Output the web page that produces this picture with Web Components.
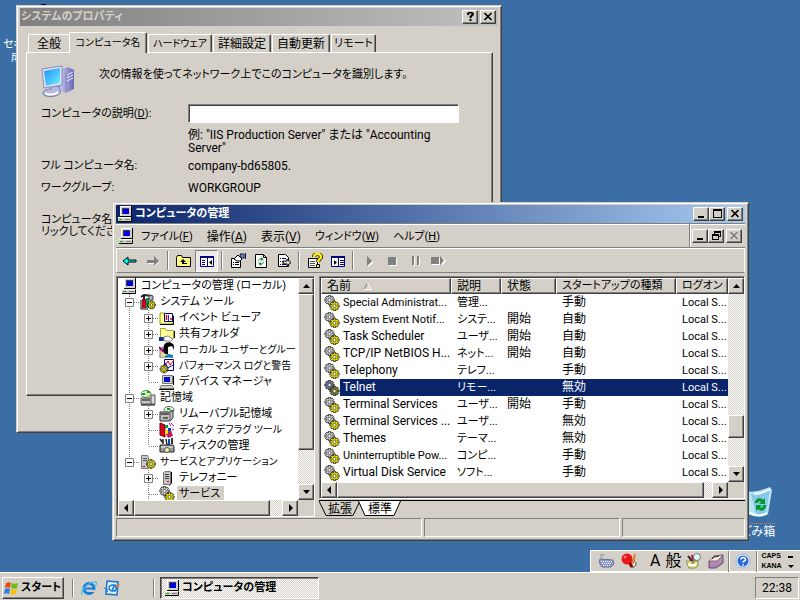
<!DOCTYPE html>
<html lang="ja">
<head>
<meta charset="utf-8">
<title>コンピュータの管理</title>
<style>
html,body{margin:0;height:100%;overflow:hidden}
body{font:12px/16px Roboto,"Noto Sans CJK JP",sans-serif;color:#000;background:#3a6ea5}
</style>
</head>
<body>
<xp-desktop></xp-desktop>
<script>
const COMMON = `
*{box-sizing:border-box}
:host{box-sizing:border-box;font-feature-settings:"palt"}
:host([hidden]){display:none}
button,input{font:inherit;color:inherit;margin:0;padding:0;border-radius:0;font-feature-settings:"palt"}
button{background:none;border:0;white-space:nowrap}
.raised{background:#d4d0c8;border:1px solid;border-color:#fff #404040 #404040 #fff;box-shadow:inset -1px -1px #808080}
`;

function gear(cx, cy, r, fill) {
  const n = 8, pts = [];
  for (let i = 0; i < n; i++) {
    const a = i / n * Math.PI * 2;
    [[-.24, r], [.24, r], [.28, r * .68], [.52, r * .68]].forEach(([d, q]) =>
      pts.push((cx + Math.cos(a + d) * q).toFixed(1) + ',' + (cy + Math.sin(a + d) * q).toFixed(1)));
  }
  return `<polygon points="${pts.join(' ')}" fill="${fill}" stroke="#111" stroke-width=".7"/><circle cx="${cx}" cy="${cy}" r="${r * .33}" fill="#fff" stroke="#111" stroke-width=".6"/>`;
}
const PC = `<path d="M3 0h11v10H3z" fill="#d4d0c8"/><path d="M3 .5h11M3.500 0v10" stroke="#fff"/><path d="M14.500 0v10.500H3" stroke="#000" fill="none"/><path d="M5 2h7v6H5z" fill="#444"/><path d="M6 3h6v5H6z" fill="#0000e0"/><path d="M2 11h12v4H1v-3z" fill="#d4d0c8"/><path d="M1 11.500h13" stroke="#fff"/><path d="M1 15.500h13.500v-4" stroke="#000" fill="none"/><path d="M2 13h3v1H2z" fill="#0b0"/><path d="M8 13h5v1H8z" fill="#808080"/>`;
const FOLDER = `<path d="M1 3h5l1 2h7v9H1z" fill="#ffff9c" stroke="#9c9a00"/>`;
const ICONS = {
  computer: [16, PC],
  gears: [16, gear(5.500, 5, 4.800, '#d0d0d0') + gear(10.500, 11, 4.800, '#f0e800')],
  gearsel: [16, gear(5.500, 5, 4.800, '#7880a8') + gear(10.500, 11, 4.800, '#808830')],
  tools: [16, `<path d="M2 5h4v9H2z" fill="#c00020"/><path d="M1 3l3-2 8 1M4 2v4" stroke="#222" stroke-width="2" fill="none"/><path d="M6 4h3v10H6z" fill="#109060"/><path d="M9 1l4 1v4H9z" fill="#b8b8c0" stroke="#444"/><path d="M1 6v9h7" stroke="#000" fill="none"/>` + gear(11.500, 11, 4, '#f0e800')],
  event: [16, FOLDER + `<path d="M5.500 3.500h8v8h-8z" fill="#fff" stroke="#000080"/><path d="M7.500 5v5M12 8v2" stroke="#e00000" stroke-width="1.500"/><path d="M9.500 5v6" stroke="#22f"/><path d="M1 14.500h13.500V6" stroke="#000" fill="none"/>`],
  share: [16, `<path d="M1.500 2.500h5l1 2h7v8h-13z" fill="#ffff9c" stroke="#a8a430"/><path d="M0 11h5v4H0z" fill="#0830a0"/><path d="M5 11l4-1 5 3-2 2H5z" fill="#fff" stroke="#888"/><path d="M15.500 5v7" stroke="#000"/>`],
  users: [16, `<path d="M1 7l5-3 5 9-4 3H1z" fill="#e7d8a0" stroke="#777"/><path d="M5 4c0-5 10-5 10 1v3l-2-2-4 2v4H6L4 8z" fill="#000"/><path d="M9 5l4-1 2 4-2 4H9z" fill="#fff"/><path d="M0 5l5 5" stroke="#a00070" stroke-width="2"/><path d="M5 15l4-3 5 1v3z" fill="#1880c0"/>`],
  perf: [16, `<path d="M5.500 1.500h9v11h-9z" fill="#fff" stroke="#000080"/><path d="M6 8l3-5 2 4 4-5" stroke="#e00000" fill="none"/><path d="M6 5l3 5 5-3" stroke="#00f" fill="none"/>` + gear(5, 11, 4, '#f0e800')],
  device: [16, `<path d="M3.500 1.500h10v8h-10z" fill="#d4d0c8" stroke="#777"/><path d="M5 3h6v5H5z" fill="#0010d0"/><path d="M2 11.500h11l2 3H1z" fill="#d4d0c8" stroke="#777"/><path d="M0 15.500h15M14.500 2v9" stroke="#000"/>`],
  storage: [16, `<ellipse cx="6" cy="4" rx="5" ry="3.500" fill="#d8f4d8" stroke="#777"/><path d="M2 4h3M7 2h3" stroke="#00b000" stroke-width="2"/><path d="M6 4l4 2" stroke="#dd0"/><path d="M1 8h11v6H1z" fill="#c8c8c8" stroke="#555"/><path d="M11 5h4v9h-4z" fill="#ddd" stroke="#555"/><path d="M2 10h8M1 15h14" stroke="#000"/>`],
  removable: [16, `<ellipse cx="10" cy="3.500" rx="5" ry="3" fill="#e8f8e0" stroke="#666"/><path d="M8 3h3" stroke="#00a000" stroke-width="2"/><path d="M11 4l3 1" stroke="#08d"/><path d="M1 6h10l3-2v8l-3 3H1z" fill="#c0c0c0" stroke="#333"/><path d="M2 8h8M4 12h5" stroke="#000"/><path d="M11 6v9" stroke="#555"/>`],
  defrag: [16, `<path d="M1 1l5 2v12l-5-2z" fill="#e00020" stroke="#600"/><path d="M6 3h3v3H6zM9 9h3v3H9z" fill="#00a040"/><path d="M9 6h3v3H9z" fill="#0040e0"/><path d="M7 12l5-4 2 6-5 2z" fill="#c02060"/><path d="M10 1l2 3M12 1l3 3M13 7l2 1" stroke="#c000c0"/><path d="M6 8h3v4H6z" fill="#eee000"/>`],
  diskmgmt: [16, `<path d="M1 1l3 4M4 1v5M7 1l1 6" stroke="#222" stroke-width="1.500"/><path d="M10 1v7" stroke="#04c" stroke-width="2"/><path d="M13 0v6" stroke="#333" stroke-width="2"/><path d="M1 7h13l1 2v5H1z" fill="#999" stroke="#222"/><path d="M2 9h12" stroke="#fff"/><circle cx="8" cy="12" r="2.500" fill="#f8f4b0" stroke="#555"/>`],
  apps: [16, `<path d="M1.500 1.500h6l1 2v11h-7z" fill="#c8c8c8" stroke="#777"/><path d="M3 4.500h4M3 6.500h4" stroke="#555"/><path d="M3 12h2v1H3z" fill="#e00"/>` + gear(11, 10, 4.500, '#f0e800')],
  server: [16, `<path d="M4.500 2.500l2-1h5v12l-1 1h-6z" fill="#c4c4c4" stroke="#777"/><path d="M6 4.500h4M6 6.500h4M6 8.500h4" stroke="#444"/><path d="M12.500 2v11l-2 2.500" stroke="#000" fill="none"/><path d="M8 11h2v1H8z" fill="#e00"/>`],
  back: [16, `<path d="M1 8l5-4v3h8v2H6v3z" fill="#0ff" stroke="#000"/>`],
  forward: [16, `<path d="M14 8L9 3v4H2v3h7v3z" fill="#808080"/><path d="M3 10.500h6M9.500 13L14.500 8.500" stroke="#fff"/>`],
  up: [16, `<path d="M.5 13.500v-9l1-2h4l1 2h8v9z" fill="#ffff80" stroke="#000"/><path d="M7 6l-3 3h2v2h5v-1H8V9h2z" fill="#000"/>`],
  panetree: [16, `<path d="M1.500 3.500h13v10h-13z" fill="#fff" stroke="#000080"/><path d="M1 3h14v2H1z" fill="#000080"/><path d="M8.500 5v9" stroke="#000080"/><path d="M3 7h3v1H3zM3 9h3v1H3zM3 11h3v1H3z" fill="#000080"/><path d="M13 7v5l-3-2.500z" fill="#000"/>`],
  pane2: [16, `<path d="M1.500 3.500h13v10h-13z" fill="#fff" stroke="#000080"/><path d="M1 3h14v2H1z" fill="#000080"/><path d="M8.500 5v9" stroke="#000080"/><path d="M10 7h4v1h-4zM10 9h4v1h-4zM10 11h4v1h-4z" fill="#000080"/><path d="M4 7v5l3-2.500z" fill="#000"/>`],
  props: [16, `<path d="M1.500 5.500h9v9h-9z" fill="#fff" stroke="#000"/><path d="M3 9.500h1M5 9.500h4M3 11.500h1M5 11.500h4" stroke="#000"/><path d="M4 6l4-4 4 4-2 2H7z" fill="#fff" stroke="#000"/><path d="M10 1h4v4h-3z" fill="#7894c8" stroke="#123"/><path d="M15.500 0v6" stroke="#000080"/>`],
  refresh: [16, `<path d="M2.500 1.500h8l3 3v10h-11z" fill="#fff" stroke="#000"/><path d="M10.500 1.500v3h3" fill="none" stroke="#000"/><path d="M5.500 8c0-2 3-3 5-1M10.500 9c0 2-3 3-5 1" fill="none" stroke="#008000"/><path d="M8 4l2 2-2 2zM8 9l-2 2 2 2z" fill="#008000"/>`],
  export: [16, `<path d="M2.500 1.500h7l3 3v9h-10z" fill="#fff" stroke="#000"/><path d="M4 5.500h1M6 5.500h4M4 8.500h1M6 8.500h4M4 11.500h1M6 11.500h4" stroke="#000080"/><path d="M7 8h4V6l4 3.500-4 3.500v-2H7z" fill="#d4d0c8" stroke="#000"/>`],
  help: [16, `<path d="M1.500 5.500h9v9h-9z" fill="#fff" stroke="#000"/><path d="M3 8.500h5M3 10.500h5M3 12.500h5" stroke="#555"/><path d="M7 4c0-4 7-4 7 0 0 2-3 2-3 5" fill="none" stroke="#000" stroke-width="4"/><path d="M7 4c0-4 7-4 7 0 0 2-3 2-3 5" fill="none" stroke="#fff000" stroke-width="2.500"/><path d="M9.500 11.500h3v3h-3z" fill="#fff000" stroke="#000"/>`],
  play: [16, `<path d="M7 13.500l5-5" stroke="#fff" stroke-width="1.500"/><path d="M6 3v10l5-5z" fill="#808080"/>`],
  stop: [16, `<path d="M5 5h8v8H5z" fill="#fff"/><path d="M4 4h8v8H4z" fill="#808080"/>`],
  pause: [16, `<path d="M6 4h2v9H6zM11 4h2v9h-2z" fill="#fff"/><path d="M5 3h2v9H5zM10 3h2v9h-2z" fill="#808080"/>`],
  restart: [16, `<path d="M2 5h8v7H2zM12 4l4 4-4 5z" fill="#fff"/><path d="M1 4h8v7H1zM10 3v9l4-4.500z" fill="#808080"/>`],
  winflag: [16, `<path d="M2 3c2-1 3-1 5 0L6 8C4 7 3 7 1 8z" fill="#e84818"/><path d="M8 3c2 1 4 1 6 0l-1 5c-2 1-4 1-6 0z" fill="#70b818"/><path d="M1 9c2-1 3-1 5 0l-1 5c-2-1-3-1-5 0z" fill="#2878e0"/><path d="M7 9c2 1 4 1 6 0l-1 5c-2 1-4 1-6 0z" fill="#f8c010"/>`],
  ie: [16, `<circle cx="8" cy="8.500" r="5" fill="none" stroke="#1480dc" stroke-width="3"/><path d="M4 8.500h9" stroke="#1480dc" stroke-width="2"/><path d="M9 10h7v2H9z" fill="#d4d0c8"/><path d="M1 15C-1 10 9 1 15 2c1 1 0 3-1 4" fill="none" stroke="#58b8f0" stroke-width="1.300"/>`],
  outlook: [16, `<path d="M3 1l11 1-1 13-11-1z" fill="#dceeff" stroke="#1878d0" stroke-width="1.500"/><path d="M10 5c-6-1-7 6-1 6 4 0 4-4 2-6l-3 5" fill="none" stroke="#1878d0" stroke-width="1.500"/><path d="M12 5l4-1-3 4z" fill="#f07020"/><path d="M0 8l4 2M1 12l3-1" stroke="#1878d0"/>`],
  keyboard: [16, `<path d="M3 5c-5-6 5-2 1-3" fill="none" stroke="#888"/><path d="M1 6l13 1 1 4-3 3H3L0 9z" fill="#8c98d0" stroke="#6670a0"/><path d="M2 8.500h11M3 10.500h10M4 12.500h8" stroke="#fff" stroke-dasharray="1 1"/>`],
  racket: [16, `<path d="M12 8c5 0 3 7-1 6S9 9 12 8" fill="#fff" stroke="#333"/><path d="M14 1l-2 10" stroke="#e08030" stroke-width="2"/><circle cx="6" cy="6" r="5.500" fill="#e81818"/><path d="M9 10l2 4" stroke="#900" stroke-width="3"/><circle cx="4" cy="4" r="1.500" fill="#ff7070"/>`],
  palette: [16, `<path d="M0 8h12v5l-3 2H3z" fill="#eee860" stroke="#887"/><path d="M2 3l4 5" stroke="#222" stroke-width="2"/><path d="M6 2l1 6" stroke="#e00020" stroke-width="2"/><path d="M8 4v5" stroke="#08c" stroke-width="2"/><circle cx="11" cy="4" r="3.500" fill="#dff" stroke="#777"/><path d="M9 7l-3 4" stroke="#888" stroke-width="2"/><path d="M2 12h8" stroke="#fff" stroke-width="2"/>`],
  toolbox: [16, `<path d="M1 8l5-5 9-1v8l-7 5H1z" fill="#a888b0" stroke="#604868"/><path d="M1 8l5-5 9-1-6 6z" fill="#f8e8d0" stroke="#777"/><path d="M4 6l2-2 5-1" stroke="#222" fill="none"/><path d="M2 11h6l6-5" stroke="#e080c0" fill="none"/>`],
  qhelp: [16, `<circle cx="8" cy="8" r="7" fill="#f0f8ff" stroke="#90b0e8"/><circle cx="8" cy="8" r="5.500" fill="#2868d8"/><path d="M6 6.500c0-3 4.500-2.500 4.500 0C10.500 8 8 8 8 9.500M8 11v1.500" stroke="#fff" stroke-width="1.600" fill="none"/>`],
  bigpc: [34, `<defs><linearGradient id="s" x1="0" y1="0" x2="1" y2="1"><stop offset="0" stop-color="#2090f8"/><stop offset="1" stop-color="#70f0ff"/></linearGradient><linearGradient id="t"><stop offset="0" stop-color="#dcdcf4"/><stop offset="1" stop-color="#6468b0"/></linearGradient></defs><path d="M18 5l9-3 6 3v19l-8 4-9-3z" fill="url(#t)"/><path d="M25 8v19" stroke="#8488c0"/><path d="M26 10l6-3M26 13l6-3M26 16l6-3" stroke="#f0f0ff"/><path d="M10 21h8l1 4c4 7-17 9-17 3 0-3 5-4 8-4z" fill="#b4b8e0" stroke="#7478b0"/><path d="M4 28c3 2 10 2 13-1" stroke="#fff" stroke-width="2" fill="none"/><path d="M1 4l20-3v19L3 23z" fill="#e4e6fa" stroke="#8488c0"/><path d="M3 6l16-3v15L5 21z" fill="url(#s)"/>`],
  bin: [34, `<path d="M4 5c8 2 18-1 25-4l2 3-4 24c-5 4-14 3-20 0z" fill="#b8e4f4"/><path d="M10 8c7 0 13-2 19-6l-4 26c-4 2-7 2-10 1z" fill="#88c8e8"/><path d="M13 8c6 0 11-2 16-5M8 26c5 4 13 4 18 1" stroke="#f4ffff" stroke-width="2" fill="none"/><path d="M14 17c0-5 6-6 8-3l2-2v6h-6l2-2c-1-1-3-1-3 1z" fill="#009828"/><path d="M25 19c0 6-6 7-8 4l-2 2v-6h6l-2 2c1 1 3 1 3-2z" fill="#009828"/>`],
};
class XpIcon extends HTMLElement {
  constructor() { super(); this.attachShadow({ mode: 'open' }); }
  connectedCallback() {
    const [size, body] = ICONS[this.getAttribute('name')];
    this.shadowRoot.innerHTML = `<style>:host{display:inline-flex;flex:none}svg{display:block}</style>
      <svg width="${size}" height="${size}" viewBox="0 0 ${size} ${size}" fill="none" aria-hidden="true">${body}</svg>`;
  }
}
customElements.define('xp-icon', XpIcon);

const GLYPH = {
  min: '<path d="M3 8h6v2H3z"/>',
  max: '<path d="M2 1h9v9H2zM3 3v6h7V3z" fill-rule="evenodd"/>',
  close: '<path d="M2.500 2l7 7M9.500 2l-7 7" fill="none" stroke="currentColor" stroke-width="1.700"/>',
  help: '<path d="M3 3c0-3 7-3 7 0 0 2-2.500 2-2.500 4h-2c0-3 2-3 2-4S5 2 5 4H3zM5.500 8h2v2h-2z"/>',
  restore: '<path d="M4 1h7v6H9v3H2V4h2zM5 3v1h4v2h1V3zM3 6v3h5V6z" fill-rule="evenodd"/>',
  up: '<path d="M3 8l3.500-4L10 8z"/>', down: '<path d="M3 4l3.500 4L10 4z"/>',
  left: '<path d="M8 2v8L4 6z"/>', right: '<path d="M5 2v8l4-4z"/>'
};
const glyph = (n, c = '#000') => `<svg width="13" height="12" viewBox="0 0 13 12" fill="${c}" color="${c}" aria-hidden="true">${GLYPH[n]}</svg>`;

class XpCaption extends HTMLElement {
  connectedCallback() {
    const names = { min: '最小化', max: '最大化', close: '閉じる', help: 'ヘルプ', restore: '元に戻す' };
    const off = this.hasAttribute('disabled-close');
    this.attachShadow({ mode: 'open' }).innerHTML = `<style>${COMMON}
      :host{display:flex;flex:none}
      button{width:16px;height:14px;display:flex;align-items:center;justify-content:center}
      button[data-k=close]{margin-left:2px} svg{display:block;flex:none}</style>` +
      this.getAttribute('buttons').split(' ').map(k =>
        `<button class="raised" data-k="${k}" aria-label="${names[k]}">${glyph(k, off && k === 'close' ? '#808080' : '#000')}</button>`).join('');
  }
}
customElements.define('xp-caption', XpCaption);

class XpWindow extends HTMLElement {
  connectedCallback() {
    const ic = this.getAttribute('icon');
    this.attachShadow({ mode: 'open' }).innerHTML = `<style>${COMMON}
      :host{display:flex;flex-direction:column;background:#d4d0c8;border:1px solid;border-color:#d4d0c8 #404040 #404040 #d4d0c8;
        box-shadow:inset 1px 1px #fff,inset -1px -1px #808080;padding:2px 3px 3px}
      header{display:flex;align-items:center;flex:none;height:18px;padding:0 2px 0 1px;gap:2px;color:#fff;
        background:linear-gradient(90deg,#0a246a,#a6caf0);font-size:11px;font-weight:bold}
      :host([inactive]) header{background:linear-gradient(90deg,#808080,#c0c0c0);color:#d4d0c8}
      h1{font:inherit;margin:0;flex:1;min-width:0;white-space:nowrap}
      main{display:flex;flex-direction:column;flex:1;min-height:0}</style>
      <header>${ic ? `<xp-icon name="${ic}"></xp-icon>` : ''}<h1>${this.getAttribute('caption')}</h1>
      <xp-caption buttons="${this.getAttribute('buttons')}"></xp-caption></header><main><slot></slot></main>`;
  }
}
customElements.define('xp-window', XpWindow);

class XpScroll extends HTMLElement {
  connectedCallback() {
    const v = this.hasAttribute('vertical');
    const [a, t, b] = this.getAttribute('parts').split(' ');
    this.attachShadow({ mode: 'open' }).innerHTML = `<style>${COMMON}
      :host{display:flex;flex:none;${v ? 'flex-direction:column;width:16px' : 'height:16px'};
        background:repeating-conic-gradient(#fff 0 25%,#d4d0c8 0 50%) 0 0/2px 2px}
      button{width:16px;height:16px;flex:none;display:flex;align-items:center;justify-content:center}
      svg{flex:none} i{flex:0 1 0} i:nth-of-type(1){flex-grow:${a}} i:nth-of-type(2){flex-grow:${t}} i:nth-of-type(3){flex-grow:${b}}</style>
      <button class="raised" aria-label="前へスクロール">${glyph(v ? 'up' : 'left')}</button><i></i><i class="raised"></i><i></i>
      <button class="raised" aria-label="次へスクロール">${glyph(v ? 'down' : 'right')}</button>`;
  }
}
customElements.define('xp-scroll', XpScroll);

class XpSystemProperties extends HTMLElement {
  connectedCallback() {
    this.attachShadow({ mode: 'open' }).innerHTML = `<style>${COMMON}
      :host{display:flex;flex-direction:column;flex:1;padding:6px 5px 33px 6px}
      nav{display:flex;align-items:flex-end;padding-left:2px;height:20px}
      nav button{height:18px;font-size:12px;line-height:16px;border:solid;border-width:1px 1px 0;border-color:#fff #404040 #fff #fff;
        border-radius:2px 2px 0 0;box-shadow:inset -1px 0 #808080;margin-right:1px;flex:none;text-align:center}
      .w1{width:41px}.w2{width:78px}.w3{width:64px}.w4{width:58px}.w5{width:45px}
      nav .w3{font-size:10px}
      nav .w5{font-size:11px}
      nav .w1{margin:0;border-right:0;box-shadow:none}
      nav [aria-selected=true]{height:21px;background:#d4d0c8;position:relative;margin-bottom:-1px;font-size:10px;padding-bottom:1px}
      section{flex:1;border:1px solid;border-color:#fff #404040 #404040 #fff;box-shadow:inset -1px -1px #808080;padding:12px 33px 0 14px;font-size:12px}
      .intro{display:flex;gap:24px;font-size:11px;line-height:20px}
      p{margin:0}
      .form{display:grid;grid-template-columns:147px 1fr;align-items:center;margin-top:5px}
      .form label,.form .l{font-size:11px}
      input{width:100%;height:19px;background:#fff;border:1px solid;border-color:#808080 #fff #fff #808080;box-shadow:inset 1px 1px #404040;outline:0;padding:0 3px}
      .eg{line-height:13px;margin:6px 0 0}
      .r{line-height:22px}
      .note{font-size:11px;line-height:12px;margin-top:15px}</style>
      <nav role="tablist"><button role="tab" class="w1">全般</button><button role="tab" class="w2" aria-selected="true">コンピュータ名</button><button role="tab" class="w3">ハードウェア</button><button role="tab" class="w4">詳細設定</button><button role="tab" class="w4">自動更新</button><button role="tab" class="w5">リモート</button></nav>
      <section><div class="intro"><xp-icon name="bigpc"></xp-icon><p>次の情報を使ってネットワーク上でこのコンピュータを識別します。</p></div>
      <div class="form"><label for="d">コンピュータの説明(<u>D</u>):</label><input id="d">
      <span></span><div class="eg">例: "IIS Production Server" または "Accounting<br>Server"</div>
      <span class="l r">フル コンピュータ名:</span><span class="r">company-bd65805.</span>
      <span class="l r">ワークグループ:</span><span class="r">WORKGROUP</span></div>
      <p class="note">コンピュータ名を<br>リックしてくださ</p></section>`;
  }
}
customElements.define('xp-system-properties', XpSystemProperties);

class XpToolbar extends HTMLElement {
  connectedCallback() {
    const items = [['back', '戻る'], ['forward', '進む'], 0, ['up', '1 つ上'], ['panetree', 'ツリー'], 0, ['props', 'プロパティ'], ['refresh', '更新'], ['export', 'エクスポート'], 0, ['help', 'ヘルプ'], ['pane2', 'ウィンドウ'], 0, ['play', '開始'], ['stop', '停止'], ['pause', '一時停止'], ['restart', '再起動']];
    this.attachShadow({ mode: 'open' }).innerHTML = `<style>${COMMON}
      :host{display:flex;align-items:center;height:25px;flex:none;padding-left:1px;border:1px solid;border-color:#fff #fff #808080 #fff}
      button{width:23px;height:22px;flex:none;display:flex;align-items:center;justify-content:center}
      i{width:2px;height:19px;margin:0 3px;border-left:1px solid #808080;border-right:1px solid #fff}
      .on{border:1px solid;border-color:#808080 #fff #fff #808080;background:#eceae6}</style>` +
      items.map(x => x ? `<button class="${x[0] === 'panetree' ? 'on' : ''}" aria-label="${x[1]}"><xp-icon name="${x[0]}"></xp-icon></button>` : '<i></i>').join('');
  }
}
customElements.define('xp-toolbar', XpToolbar);

class XpMenubar extends HTMLElement {
  connectedCallback() {
    this.attachShadow({ mode: 'open' }).innerHTML = `<style>${COMMON}
      :host{display:flex;align-items:center;flex:none;height:25px;border-top:1px solid #808080;border-bottom:1px solid #808080;font-size:11px;box-shadow:inset 0 1px #fff}
      nav{display:flex;align-items:center;gap:14px;padding:2px 0 0 7px;flex:1}
      .s{font-size:12px}
      xp-icon{margin-left:2px}
      div{display:flex;align-items:center;align-self:stretch;padding:0 3px 0 2px;border-left:1px solid #808080;box-shadow:inset 1px 0 #fff}</style>
      <xp-icon name="computer"></xp-icon><nav><button>ファイル(<u>F</u>)</button><button class="s">操作(<u>A</u>)</button><button class="s">表示(<u>V</u>)</button><button>ウィンドウ(<u>W</u>)</button><button>ヘルプ(<u>H</u>)</button></nav>
      <div><xp-caption buttons="min restore close" disabled-close></xp-caption></div>`;
  }
}
customElements.define('xp-menubar', XpMenubar);

class XpTreeItem extends HTMLElement {
  connectedCallback() {
    const cells = (this.getAttribute('guides') || '').split('');
    const sign = this.getAttribute('sign');
    const svg = cells.map((c, i) => {
      const last = i === cells.length - 1;
      let p = '';
      if (c !== '_') p += `<path d="M8.500 0v${c === 'l' ? 8 : 16}" stroke="#808080" stroke-dasharray="1 1"/>`;
      if (last) p += '<path d="M9 8.500h10" stroke="#808080" stroke-dasharray="1 1"/>';
      if (last && sign) p += `<path d="M4.500 4.500h8v8h-8z" fill="#fff" stroke="#808080"/><path d="M6 8.500h5${sign === '+' ? 'M8.500 6v5' : ''}" stroke="#000"/>`;
      return `<svg width="19" height="16" viewBox="0 0 19 16" fill="none" aria-hidden="true">${p}</svg>`;
    }).join('');
    this.attachShadow({ mode: 'open' }).innerHTML = `<style>${COMMON}
      :host{display:flex;height:16px;flex:none;padding-left:3px;white-space:nowrap;font-size:11px}
      :host([dense]){font-size:10px}
      svg{flex:none;display:block} span{padding:0 4px 0 2px;margin-left:2px}
      :host([selected]) span{background:#d4d0c8}</style>${svg}<xp-icon name="${this.getAttribute('icon')}"></xp-icon><span><slot></slot></span>`;
  }
}
customElements.define('xp-tree-item', XpTreeItem);

class XpTree extends HTMLElement {
  connectedCallback() {
    const rows = [['', '', 'computer', 'コンピュータの管理 (ローカル)'], ['t', '-', 'tools', 'システム ツール'],
      ['vt', '+', 'event', 'イベント ビューア'], ['vt', '+', 'share', '共有フォルダ'], ['vt', '+', 'users', 'ローカル ユーザーとグルー', 1],
      ['vt', '+', 'perf', 'パフォーマンス ログと警告', 1], ['vl', '', 'device', 'デバイス マネージャ'], ['t', '-', 'storage', '記憶域'],
      ['vt', '+', 'removable', 'リムーバブル記憶域'], ['vt', '', 'defrag', 'ディスク デフラグ ツール', 1], ['vl', '', 'diskmgmt', 'ディスクの管理'],
      ['l', '-', 'apps', 'サービスとアプリケーション', 1], ['_t', '+', 'server', 'テレフォニー'], ['_t', '', 'gears', 'サービス']];
    this.attachShadow({ mode: 'open' }).innerHTML = `<style>${COMMON}
      :host{display:grid;grid-template:minmax(0,1fr) 16px/minmax(0,1fr) 16px;border:1px solid;border-color:#808080 #fff #fff #808080;box-shadow:inset 1px 1px #404040;padding:1px 0 0 1px;background:#d4d0c8}
      .list{background:#fff;overflow:hidden}</style>
      <div class="list">${rows.map((r, i) => `<xp-tree-item guides="${r[0]}" sign="${r[1]}" icon="${r[2]}" ${r[4] ? 'dense' : ''} ${i === 13 ? 'selected' : ''}>${r[3]}</xp-tree-item>`).join('')}</div>
      <xp-scroll vertical parts="0 154 34"></xp-scroll><xp-scroll parts="0 137 12"></xp-scroll>`;
  }
}
customElements.define('xp-tree', XpTree);

class XpServices extends HTMLElement {
  connectedCallback() {
    const rows = [['Special Administrat...', '管理...', '', '手動'], ['System Event Notif...', 'システ...', '開始', '自動'], ['Task Scheduler', 'ユーザ...', '開始', '自動'],
      ['TCP/IP NetBIOS H...', 'ネット...', '開始', '自動'], ['Telephony', 'テレフ...', '', '手動'], ['Telnet', 'リモー...', '', '無効'], ['Terminal Services', 'ユーザ...', '開始', '手動'],
      ['Terminal Services ...', 'ユーザ...', '', '無効'], ['Themes', 'テーマ...', '', '無効'], ['Uninterruptible Pow...', 'コンピ...', '', '手動'], ['Virtual Disk Service', 'ソフト...', '', '手動']];
    this.attachShadow({ mode: 'open' }).innerHTML = `<style>${COMMON}
      :host{display:grid;grid-template:minmax(0,1fr) 16px/minmax(0,1fr) 16px;border:1px solid;border-color:#808080 #fff #fff #808080;box-shadow:inset 1px 1px #404040;padding:1px 0 0 1px;background:#d4d0c8}
      .list{background:#fff;overflow:hidden}
      table{border-collapse:separate;border-spacing:0;table-layout:fixed;width:100%}
      th{height:16px;line-height:14px;padding:0 0 0 5px;text-align:left;font-weight:normal;white-space:nowrap;overflow:hidden}
      th.k{font-size:11px} th svg{margin-left:12px}
      td{height:17px;line-height:17px;padding:0 0 0 6px;white-space:nowrap;overflow:hidden}
      td:first-child{padding:0 0 0 3px} td:first-child div{display:flex;align-items:center;height:17px}
      td:first-child span{flex:1;padding-left:3px}
      td:nth-child(2),td:nth-child(5),.dense span{font-size:11px}
      tr.sel td:not(:first-child),tr.sel span{background:#0a246a;color:#fff}</style>
      <div class="list"><table><colgroup><col><col style="width:50px"><col style="width:55px"><col style="width:120px"><col style="width:52px"></colgroup>
      <thead><tr><th class="raised">名前<svg width="9" height="8" viewBox="0 0 9 8" aria-hidden="true"><path d="M4.500 1L1 7" stroke="#808080"/><path d="M4.500 1L8 7.500H1" stroke="#fff" fill="none"/></svg></th><th class="raised">説明</th><th class="raised">状態</th><th class="raised k">スタートアップの種類</th><th class="raised k">ログオン</th></tr></thead>
      <tbody>${rows.map((r, i) => `<tr class="${i === 5 ? 'sel' : [0, 1, 9].includes(i) ? 'dense' : ''}"><td><div><xp-icon name="${i === 5 ? 'gearsel' : 'gears'}"></xp-icon><span>${r[0]}</span></div></td><td>${r[1]}</td><td>${r[2]}</td><td>${r[3]}</td><td>Local S...</td></tr>`).join('')}</tbody></table></div>
      <xp-scroll vertical parts="123 21 29"></xp-scroll><xp-scroll parts="0 367 8"></xp-scroll>`;
  }
}
customElements.define('xp-services', XpServices);

class XpManagement extends HTMLElement {
  connectedCallback() {
    this.attachShadow({ mode: 'open' }).innerHTML = `<style>${COMMON}
      :host{display:flex;flex-direction:column;flex:1;min-height:0}
      .panes{display:grid;grid-template:minmax(0,1fr)/199px minmax(0,1fr);gap:4px;flex:1;min-height:0;padding-top:3px}
      xp-tree{min-height:0}
      .right{display:flex;flex-direction:column;min-height:0;min-width:0}
      xp-services{flex:1;min-height:0}
      .tabs{display:flex;height:17px;flex:none;margin-top:1px;border-top:1px solid #000}
      .tabs button{position:relative;width:42px;height:16px;flex:none;line-height:14px}
      .tabs button+button{margin-left:-3px;width:44px}
      .tabs svg{position:absolute;left:0;top:0} .tabs span{position:relative}
      footer{display:grid;grid-template-columns:306fr 195fr 123fr;gap:2px;height:19px;flex:none;margin-top:1px}
      footer div{border:1px solid;border-color:#808080 #fff #fff #808080}</style>
      <xp-menubar></xp-menubar><xp-toolbar></xp-toolbar>
      <div class="panes"><xp-tree></xp-tree><div class="right"><xp-services></xp-services>
      <div class="tabs" role="tablist"><button role="tab"><svg width="42" height="16" viewBox="0 0 42 16" aria-hidden="true"><path d="M0 0l7 14.500h27L41 0" fill="#d4d0c8" stroke="#000"/></svg><span>拡張</span></button><button role="tab" aria-selected="true"><svg width="44" height="16" viewBox="0 0 44 16" aria-hidden="true"><path d="M0 -1l7 15.500h29L43 -1" fill="#fff" stroke="#000"/></svg><span>標準</span></button></div></div></div>
      <footer><div></div><div></div><div></div></footer>`;
  }
}
customElements.define('xp-management', XpManagement);

class XpLangbar extends HTMLElement {
  connectedCallback() {
    this.attachShadow({ mode: 'open' }).innerHTML = `<style>${COMMON}
      :host{display:flex;align-items:center;height:22px;background:#d4d0c8;border:1px solid #fff;border-width:1px 0 1px 1px;padding-left:8px;white-space:nowrap}
      button{display:flex;flex:none;margin-right:6px}
      :host>i{width:2px;height:21px;flex:none;border-left:1px solid #808080;border-right:1px solid #fff}
      .t{font-size:16px;line-height:20px;margin-right:5px}
      .a{margin-left:7px}
      .c{font:bold 7px/10px "Liberation Sans",sans-serif;margin:0 5px 0 3px;width:22px}</style>
      <button aria-label="ソフトキーボード"><xp-icon name="keyboard"></xp-icon></button><button aria-label="IME"><xp-icon name="racket"></xp-icon></button>
      <button class="t a">A</button><button class="t">般</button>
      <button aria-label="IME パッド"><xp-icon name="palette"></xp-icon></button><button aria-label="ツール" style="margin-right:4px"><xp-icon name="toolbox"></xp-icon></button><i></i>
      <button aria-label="ヘルプ" style="margin:0 5px"><xp-icon name="qhelp"></xp-icon></button><i></i><div class="c">CAPS<br>KANA</div>
      <svg width="6" height="16" viewBox="0 0 6 16" aria-hidden="true"><path d="M0 3h5v2H0zM0 12h6l-3 3z"/></svg>`;
  }
}
customElements.define('xp-langbar', XpLangbar);

class XpTaskbar extends HTMLElement {
  connectedCallback() {
    this.attachShadow({ mode: 'open' }).innerHTML = `<style>${COMMON}
      :host{display:flex;align-items:center;height:28px;background:#d4d0c8;border-top:1px solid #fff;padding:2px 1px 0 2px}
      button{display:flex;align-items:center;flex:none}
      .start{width:62px;height:22px;font-size:11px;font-weight:bold;padding-left:1px;gap:1px}
      i{width:2px;height:18px;flex:none;border-left:1px solid #808080;border-right:1px solid #fff}
      .task{width:159px;height:22px;gap:2px;padding-left:3px;font-size:11px;font-weight:bold;border:1px solid;border-color:#404040 #fff #fff #404040;box-shadow:inset 1px 1px #808080;
       background:repeating-conic-gradient(#fff 0 25%,#d4d0c8 0 50%) 0 0/2px 2px}
      .quick{display:flex;gap:7px;padding:0 33px 0 7px}
      time{margin-left:auto;width:44px;height:22px;line-height:20px;text-align:center;border:1px solid;border-color:#808080 #fff #fff #808080}</style>
      <button class="start raised"><xp-icon name="winflag"></xp-icon>スタート</button><i style="margin-left:8px"></i>
      <div class="quick"><button aria-label="Internet Explorer"><xp-icon name="ie"></xp-icon></button><button aria-label="Outlook Express"><xp-icon name="outlook"></xp-icon></button></div><i></i>
      <button class="task" style="margin-left:5px"><xp-icon name="computer"></xp-icon>コンピュータの管理</button><time>22:38</time>`;
  }
}
customElements.define('xp-taskbar', XpTaskbar);

class XpDesktop extends HTMLElement {
  connectedCallback() {
    this.attachShadow({ mode: 'open' }).innerHTML = `<style>${COMMON}
      :host{display:flex;flex-direction:column;height:100vh;overflow:hidden;background:#3a6ea5}
      .area{flex:1;position:relative;min-height:0}
      .area>*{position:absolute}
      .shortcut{left:3px;top:38px;color:#fff;font-size:11px;line-height:13px;white-space:nowrap}
      .shortcut span{margin-left:8px}
      .speck{left:41px;top:4px;width:5px;height:1px;background:#000}
      .trash{right:23px;bottom:32px;width:38px;display:flex;flex-direction:column;align-items:center;color:#fff;gap:3px}
      .trash span{white-space:nowrap;border-top:1px dotted #c08850}
      #props{left:16px;right:298px;top:5px;bottom:139px}
      #mgmt{left:112px;right:51px;top:202px;bottom:31px}
      xp-langbar{right:0;bottom:0;width:210px}</style>
      <div class="area"><div class="shortcut">セキ<br><span>成</span></div><i class="speck"></i>
      <div class="trash"><xp-icon name="bin"></xp-icon><span>ごみ箱</span></div>
      <xp-window id="props" inactive caption="システムのプロパティ" buttons="help close"><xp-system-properties></xp-system-properties></xp-window>
      <xp-window id="mgmt" icon="computer" caption="コンピュータの管理" buttons="min max close"><xp-management></xp-management></xp-window>
      <xp-langbar></xp-langbar></div><xp-taskbar></xp-taskbar>`;
  }
}
customElements.define('xp-desktop', XpDesktop);
</script>
</body>
</html>
